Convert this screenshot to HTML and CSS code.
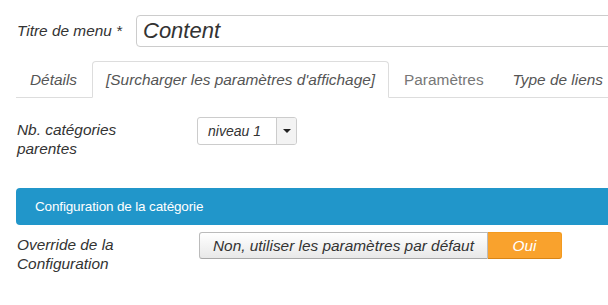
FILE: index.html
```
<!DOCTYPE html>
<html lang="fr">
<head>
  <meta charset="UTF-8">
  <title>Menu</title>
  <link rel="stylesheet" href="styles.css">
</head>
<body>
  <div class="page">
    <div class="title-row">
      <label class="title-label" for="title">Titre de menu *</label>
      <input class="title-input" id="title" type="text" value="Content">
    </div>

    <ul class="tabs">
      <li class="tab">Détails</li>
      <li class="tab active">[Surcharger les paramètres d'affichage]</li>
      <li class="tab plain">Paramètres</li>
      <li class="tab">Type de liens</li>
    </ul>

    <div class="field">
      <div class="field-label">Nb. catégories<br>parentes</div>
      <div class="select">
        <span class="select-value">niveau 1</span>
        <span class="select-caret"></span>
      </div>
    </div>

    <div class="section-bar">Configuration de la catégorie</div>

    <div class="field field-switch">
      <div class="field-label">Override de la<br>Configuration</div>
      <div class="btn-group">
        <span class="btn">Non, utiliser les paramètres par défaut</span>
        <span class="btn btn-on">Oui</span>
      </div>
    </div>
  </div>
</body>
</html>
```

FILE: styles.css
```
:root {
  --text: #333;
  --muted: #555;
  --line: #ddd;
  --blue: #2196ca;
  --orange: #f9a22d;
}

body {
  margin: 0;
  overflow: hidden;
  font-family: "Liberation Sans", Arial, sans-serif;
  font-size: 15.4px;
  color: var(--text);
  background: #fff;
}

.page {
  width: 720px;
  padding: 15px 0 0 16px;
}

.title-row {
  display: flex;
  align-items: center;
}

.title-label {
  width: 119px;
  font-style: italic;
  padding-left: 1px;
}

.title-input {
  flex: 1;
  box-sizing: border-box;
  height: 32px;
  margin: 0;
  padding: 0 6px;
  border: 1px solid #ccc;
  border-radius: 4px;
  font-family: inherit;
  font-size: 22px;
  font-style: italic;
  color: var(--text);
}

.tabs {
  display: flex;
  list-style: none;
  margin: 14px 0 0;
  padding: 0;
  border-bottom: 1px solid var(--line);
}

.tab {
  flex: none;
  height: 35px;
  line-height: 35px;
  padding: 0 13px;
  margin-right: 1px;
  margin-bottom: -1px;
  white-space: nowrap;
  font-style: italic;
  color: var(--muted);
  border: 1px solid transparent;
  border-radius: 4px 4px 0 0;
}

.tab.plain {
  font-style: normal;
  color: #777;
}

.tab.active {
  border-color: var(--line);
  border-bottom-color: #fff;
  background: #fff;
}

.field {
  display: flex;
  align-items: flex-start;
  margin-top: 19px;
}

.field-label {
  width: 180px;
  padding: 4px 0 0 1px;
  line-height: 18.5px;
  font-style: italic;
}

.select {
  display: flex;
  height: 26px;
  border: 1px solid #ccc;
  border-radius: 3px;
  overflow: hidden;
}

.select-value {
  width: 68px;
  padding: 0 0 0 10px;
  line-height: 26px;
  font-size: 14px;
  font-style: italic;
}

.select-caret {
  width: 19px;
  border-left: 1px solid #ccc;
  background: #f3f3f3;
  display: flex;
  align-items: center;
  justify-content: center;
}

.select-caret::before {
  content: "";
  border-top: 4px solid #222;
  border-left: 4px solid transparent;
  border-right: 4px solid transparent;
}

.section-bar {
  margin-top: 30px;
  height: 37px;
  line-height: 37px;
  padding-left: 19px;
  border-radius: 4px 0 0 4px;
  background: var(--blue);
  color: #fff;
  font-size: 13.5px;
  letter-spacing: -0.15px;
}

.field-switch {
  margin-top: 7px;
}

.field-switch .field-label {
  padding-top: 4px;
}

.btn-group {
  display: flex;
  margin-left: 2px;
}

.btn {
  height: 25px;
  line-height: 25px;
  padding: 0 13px;
  font-style: italic;
  border: 1px solid #bbb;
  border-bottom-color: #a8a8a8;
  border-radius: 3px 0 0 3px;
  background: linear-gradient(#fff, #e8e8e8);
}

.btn-on {
  width: 47px;
  text-align: center;
  color: #fff;
  background: var(--orange);
  border-color: #f39a1f;
  border-bottom-color: #d88416;
  border-left: 0;
  border-radius: 0 3px 3px 0;
}
```
